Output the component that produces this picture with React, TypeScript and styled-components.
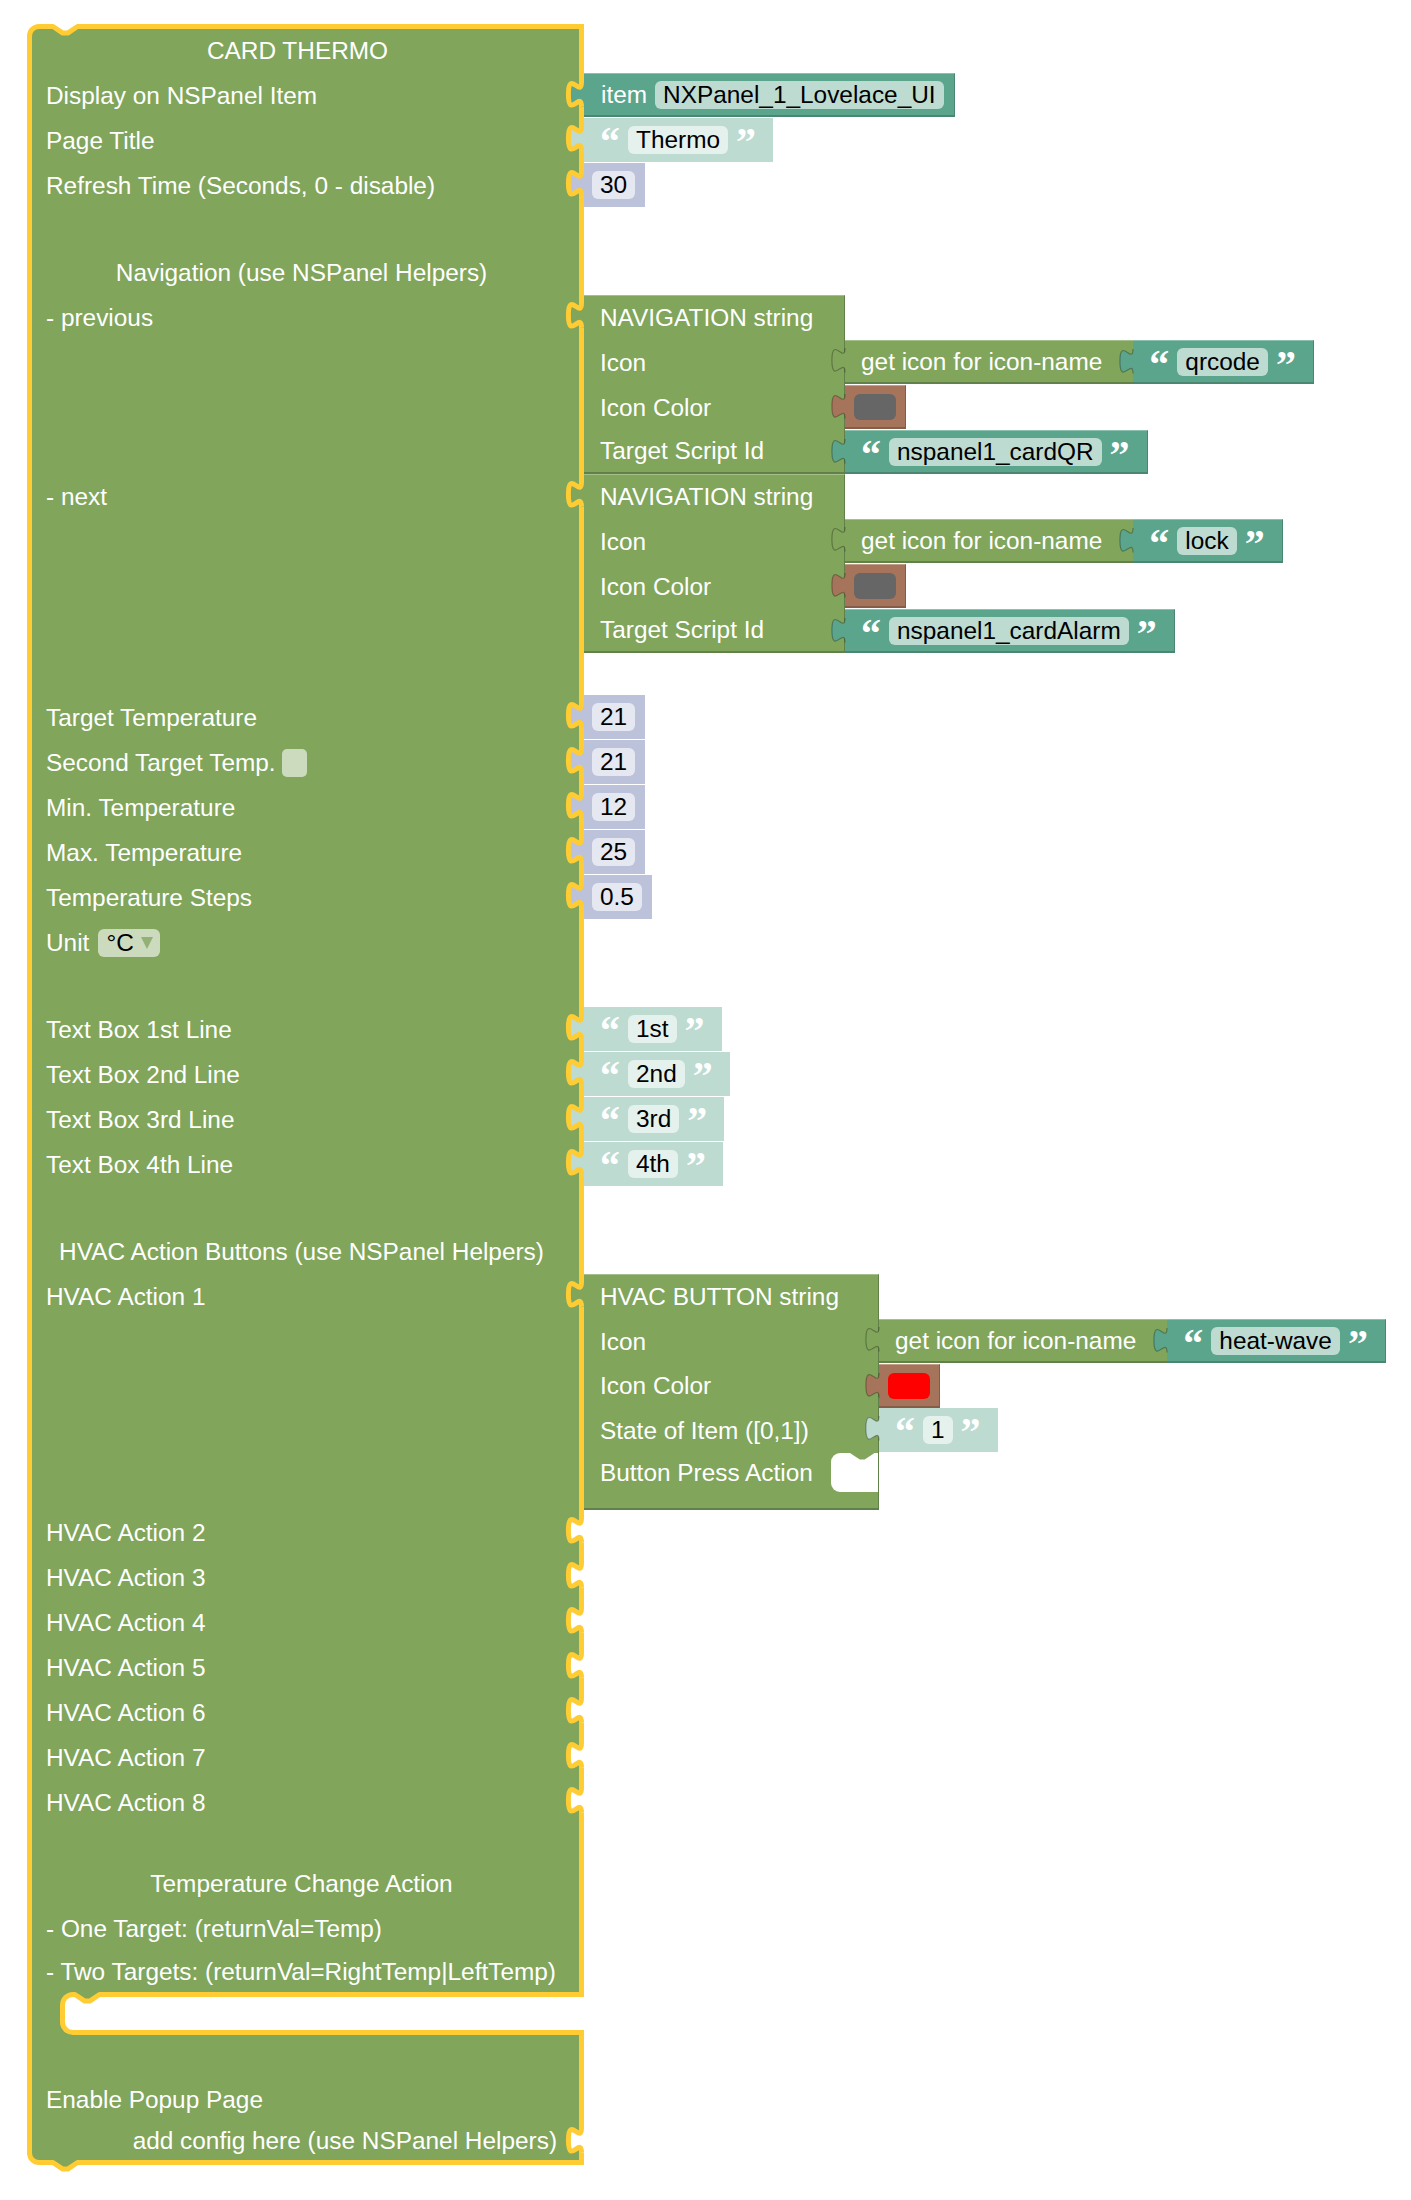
import React from "react";
import styled, { createGlobalStyle, css } from "styled-components";

// blockly-ish palette
const YELLOW = "#ffcc33";
const GREEN = "#80a55b";
const GREEN_LIGHT = "#a6c08c";
const GREEN_DARK = "#62804a";
const GREEN_FIELD = "#ccdbbd";
const TEAL = "#5ba58c";
const TEAL_LIGHT = "#8cc1af";
const TEAL_DARK = "#4a8672";
const TEAL_SHADOW = "#bddbd1";
const TEAL_FIELD = "#e5f1ed";
const NUM_SHADOW = "#bdc2db";
const NUM_FIELD = "#e5e7f1";
const BROWN = "#a5745b";
const BROWN_LIGHT = "#c29e8c";
const BROWN_DARK = "#855c48";

const FONT_SIZE = "24.4px";
const TAB_CURVE = "c0,16.4 -13.1,-13.1 -13.1,12.3 s13.1,-4.1 13.1,12.3";
const NOTCH = "l9.8,6.6 l4.9,0 l9.8,-6.6";

const GlobalStyle = createGlobalStyle`
  body {
    margin: 0;
    background: #fff;
    font-family: "Liberation Sans", Arial, sans-serif;
  }
`;

const Canvas = styled.div`
  padding: 24px 0 30px 27px;
`;

const Stack = styled.div`
  display: flex;
  flex-direction: column;
  align-items: flex-start;
`;

const Row = styled.div`
  display: flex;
  align-items: stretch;
`;

const Cell = styled.div<{ $h: number; $first?: boolean; $last?: boolean; $padR?: number }>`
  position: relative;
  box-sizing: border-box;
  flex: none;
  width: 557px;
  min-height: ${(p) => p.$h + (p.$first ? 5 : 0) + (p.$last ? 5 : 0)}px;
  background: ${GREEN};
  border-left: 5px solid ${YELLOW};
  border-right: 5px solid ${YELLOW};
  border-top: ${(p) => (p.$first ? `5px solid ${YELLOW}` : "0")};
  border-bottom: ${(p) => (p.$last ? `5px solid ${YELLOW}` : "0")};
  border-radius: ${(p) => (p.$first ? "12px 0 0 0" : p.$last ? "0 0 0 12px" : "0")};
  padding: 0 ${(p) => p.$padR ?? 22}px 0 14px;
  color: #fff;
  font-size: ${FONT_SIZE};
`;

const Label = styled.div<{ $h: number; $align: string }>`
  height: ${(p) => p.$h}px;
  display: flex;
  align-items: center;
  justify-content: ${(p) => (p.$align === "center" ? "center" : p.$align === "right" ? "flex-end" : "flex-start")};
  white-space: nowrap;
`;

const EdgeSvg = styled.svg`
  position: absolute;
  overflow: visible;
  z-index: 2;
`;

const TopNotchSvg = styled(EdgeSvg)`
  top: -5px;
  left: 21px;
`;

const BottomTabSvg = styled(EdgeSvg)`
  bottom: -12px;
  left: 21px;
`;

const EmptyNotchSvg = styled(EdgeSvg)<{ $top: number }>`
  right: -7px;
  top: ${(p) => p.$top}px;
`;

const StmtNotchSvg = styled(EdgeSvg)<{ $left: number; $top: number }>`
  left: ${(p) => p.$left}px;
  top: ${(p) => p.$top}px;
`;

const TabSvg = styled(EdgeSvg)`
  left: -16px;
  top: 8px;
`;

const Tab = ({ fill, main }: { fill: string; main?: boolean }) => {
  const x = main ? 13.5 : 16;
  return (
    <TabSvg width="18" height="26" viewBox="0 0 18 26">
      <path d={`M${x} 0 ${TAB_CURVE} L18 24.6 L18 0 Z`} fill={fill} />
      <path
        d={`M${x} 0 ${TAB_CURVE}`}
        fill="none"
        stroke={main ? YELLOW : "rgba(0,0,0,0.28)"}
        strokeWidth={main ? 5 : 1.2}
      />
    </TabSvg>
  );
};

const EmptyNotch = ({ top = 8 }: { top?: number }) => (
  <EmptyNotchSvg $top={top} width="18" height="26" viewBox="0 0 18 26">
    <path d={`M13.5 0 ${TAB_CURVE} L18 24.6 L18 0 Z`} fill="#fff" />
    <path d={`M13.5 0 ${TAB_CURVE}`} fill="none" stroke={YELLOW} strokeWidth={5} />
  </EmptyNotchSvg>
);

const TopNotch = () => (
  <TopNotchSvg width="25" height="12" viewBox="0 0 25 12">
    <path d={`M0 0 L0 2.5 ${NOTCH} L24.5 0 Z`} fill="#fff" />
    <path d={`M-2 2.5 L0 2.5 ${NOTCH} L26.5 2.5`} fill="none" stroke={YELLOW} strokeWidth={5} strokeLinejoin="round" />
  </TopNotchSvg>
);

const BottomTab = () => (
  <BottomTabSvg width="25" height="12" viewBox="0 0 25 12">
    <path d={`M0 0 L0 2.5 ${NOTCH} L24.5 0 Z`} fill={GREEN} />
    <path d={`M-2 2.5 L0 2.5 ${NOTCH} L26.5 2.5`} fill="none" stroke={YELLOW} strokeWidth={5} strokeLinejoin="round" />
  </BottomTabSvg>
);

type MainRowProps = {
  h?: number;
  label?: React.ReactNode;
  align?: "left" | "center" | "right";
  first?: boolean;
  last?: boolean;
  empty?: boolean;
  notchTop?: number;
  padR?: number;
  children?: React.ReactNode;
};

const MainRow = ({ h = 45, label, align = "left", first, last, empty, notchTop, padR, children }: MainRowProps) => (
  <Row>
    <Cell $h={h} $first={first} $last={last} $padR={padR}>
      {first && <TopNotch />}
      <Label $h={h} $align={align}>{label}</Label>
      {empty && <EmptyNotch top={notchTop} />}
      {last && <BottomTab />}
    </Cell>
    {children}
  </Row>
);

// statement input of the main block (C-shape)
const MainStmt = styled.div`
  display: flex;
  box-sizing: border-box;
  width: 557px;
  height: 43px;
  background: ${GREEN};
  border-left: 5px solid ${YELLOW};
  padding-left: 28px;
`;

const MainStmtGap = styled.div`
  position: relative;
  flex: 1;
  background: #fff;
  border: 5px solid ${YELLOW};
  border-right: 0;
  border-radius: 13px 0 0 13px;
`;

/* ---------- value blocks ---------- */

const Field = styled.span<{ $bg: string }>`
  display: inline-flex;
  align-items: center;
  height: 28px;
  padding: 0 8px;
  border-radius: 6px;
  background: ${(p) => p.$bg};
  color: #000;
  font-size: ${FONT_SIZE};
  white-space: nowrap;
`;

const Quote = styled.span<{ $open?: boolean }>`
  position: relative;
  top: 2px;
  align-self: flex-start;
  width: 20px;
  height: 44px;
  text-align: center;
  font: bold 40px "Liberation Serif", serif;
  line-height: 44px;
  color: #fff;
  margin: ${(p) => (p.$open ? "0 8px 0 0" : "0 0 0 8px")};
`;

const solidEdges = (light: string, dark: string) => css`
  border-top: 1px solid ${light};
  border-bottom: 2px solid ${dark};
  border-right: 1px solid ${dark};
`;

const StringBody = styled.div<{ $shadow?: boolean }>`
  position: relative;
  flex: none;
  align-self: flex-start;
  display: flex;
  align-items: center;
  box-sizing: border-box;
  height: 44px;
  padding: 0 17px 0 16px;
  background: ${(p) => (p.$shadow ? TEAL_SHADOW : TEAL)};
  ${(p) => !p.$shadow && solidEdges(TEAL_LIGHT, TEAL_DARK)}
`;

const TextBlock = ({ value, shadow, main }: { value: string; shadow?: boolean; main?: boolean }) => (
  <StringBody $shadow={shadow}>
    <Tab fill={shadow ? TEAL_SHADOW : TEAL} main={main} />
    <Quote $open>“</Quote>
    <Field $bg={shadow ? TEAL_FIELD : TEAL_SHADOW}>{value}</Field>
    <Quote>”</Quote>
  </StringBody>
);

const NumberBody = styled.div`
  position: relative;
  flex: none;
  align-self: flex-start;
  display: flex;
  align-items: center;
  box-sizing: border-box;
  height: 44px;
  padding: 0 10px 0 8px;
  background: ${NUM_SHADOW};
`;

const NumberBlock = ({ value }: { value: string }) => (
  <NumberBody>
    <Tab fill={NUM_SHADOW} main />
    <Field $bg={NUM_FIELD}>{value}</Field>
  </NumberBody>
);

const ItemBody = styled.div`
  position: relative;
  flex: none;
  align-self: flex-start;
  display: flex;
  align-items: center;
  box-sizing: border-box;
  height: 44px;
  padding: 0 10px 0 17px;
  background: ${TEAL};
  color: #fff;
  font-size: ${FONT_SIZE};
  ${solidEdges(TEAL_LIGHT, TEAL_DARK)}
`;

const ItemText = styled.span`
  margin-right: 8px;
`;

const ColorBody = styled.div`
  position: relative;
  flex: none;
  align-self: flex-start;
  display: flex;
  align-items: center;
  box-sizing: border-box;
  height: 44px;
  padding: 0 9px;
  background: ${BROWN};
  ${solidEdges(BROWN_LIGHT, BROWN_DARK)}
`;

const Swatch = styled.span<{ $color: string }>`
  width: 42px;
  height: 26px;
  border-radius: 6px;
  background: ${(p) => p.$color};
`;

const ColorBlock = ({ color }: { color: string }) => (
  <ColorBody>
    <Tab fill={BROWN} />
    <Swatch $color={color} />
  </ColorBody>
);

const ValueGroup = styled.div`
  position: relative;
  flex: none;
  align-self: flex-start;
  display: flex;
`;

const GetIconBody = styled.div`
  box-sizing: border-box;
  height: 44px;
  display: flex;
  align-items: center;
  padding: 0 31px 0 16px;
  background: ${GREEN};
  color: #fff;
  font-size: ${FONT_SIZE};
  white-space: nowrap;
  border-top: 1px solid ${GREEN_LIGHT};
  border-bottom: 2px solid ${GREEN_DARK};
`;

const GetIcon = ({ name }: { name: string }) => (
  <ValueGroup>
    <Tab fill={GREEN} />
    <GetIconBody>get icon for icon-name</GetIconBody>
    <TextBlock value={name} />
  </ValueGroup>
);

/* ---------- nested string-builder blocks ---------- */

const Block = styled.div`
  position: relative;
  flex: none;
  align-self: flex-start;
  display: flex;
  flex-direction: column;
`;

const BlockCell = styled.div<{ $w: number; $h?: number; $top?: boolean; $bottom?: boolean }>`
  box-sizing: border-box;
  flex: none;
  width: ${(p) => p.$w}px;
  height: ${(p) => p.$h ?? 45}px;
  display: flex;
  align-items: center;
  padding-left: 16px;
  background: ${GREEN};
  color: #fff;
  font-size: ${FONT_SIZE};
  white-space: nowrap;
  border-top: ${(p) => (p.$top ? `1px solid ${GREEN_LIGHT}` : "0")};
  border-bottom: ${(p) => (p.$bottom ? `2px solid ${GREEN_DARK}` : "0")};
  border-right: 1px solid ${GREEN_DARK};
`;

const NavBlock = ({ icon, target }: { icon: string; target: string }) => (
  <Block>
    <Tab fill={GREEN} main />
    <Row>
      <BlockCell $w={261} $top>NAVIGATION string</BlockCell>
    </Row>
    <Row>
      <BlockCell $w={261}>Icon</BlockCell>
      <GetIcon name={icon} />
    </Row>
    <Row>
      <BlockCell $w={261}>Icon Color</BlockCell>
      <ColorBlock color="#666666" />
    </Row>
    <Row>
      <BlockCell $w={261} $h={44} $bottom>Target Script Id</BlockCell>
      <TextBlock value={target} />
    </Row>
  </Block>
);

const StmtRow = styled.div`
  display: flex;
  width: 295px;
  height: 39px;
  background: ${GREEN};
  border-right: 1px solid ${GREEN_DARK};
  box-sizing: border-box;
`;

const StmtLabel = styled.div`
  box-sizing: border-box;
  width: 247px;
  padding-left: 16px;
  display: flex;
  align-items: center;
  color: #fff;
  font-size: ${FONT_SIZE};
  white-space: nowrap;
`;

const StmtGap = styled.div`
  position: relative;
  flex: 1;
  background: #fff;
  border-radius: 9px 0 0 9px;
`;

const BottomBar = styled.div`
  box-sizing: border-box;
  width: 295px;
  height: 18px;
  background: ${GREEN};
  border-bottom: 2px solid ${GREEN_DARK};
  border-right: 1px solid ${GREEN_DARK};
`;

const HvacBlock = () => (
  <Block>
    <Tab fill={GREEN} main />
    <Row>
      <BlockCell $w={295} $top>HVAC BUTTON string</BlockCell>
    </Row>
    <Row>
      <BlockCell $w={295}>Icon</BlockCell>
      <GetIcon name="heat-wave" />
    </Row>
    <Row>
      <BlockCell $w={295} $h={44}>Icon Color</BlockCell>
      <ColorBlock color="#ff0000" />
    </Row>
    <Row>
      <BlockCell $w={295}>State of Item ([0,1])</BlockCell>
      <TextBlock value="1" shadow />
    </Row>
    <StmtRow>
      <StmtLabel>Button Press Action</StmtLabel>
      <StmtGap>
        <StmtNotchSvg $left={19} $top={0} width="25" height="8" viewBox="0 0 25 8">
          <path d={`M0 0 ${NOTCH} Z`} fill={GREEN} />
        </StmtNotchSvg>
      </StmtGap>
    </StmtRow>
    <BottomBar />
  </Block>
);

/* ---------- inline fields inside labels ---------- */

const Check = styled.span`
  display: inline-block;
  width: 25px;
  height: 28px;
  margin-left: 6px;
  border-radius: 5px;
  background: ${GREEN_FIELD};
`;

const Dropdown = styled.span`
  display: inline-flex;
  align-items: center;
  height: 28px;
  margin-left: 9px;
  padding: 0 7px 0 8px;
  border-radius: 6px;
  background: ${GREEN_FIELD};
  color: #000;
`;

const Arrow = styled.span`
  width: 0;
  height: 0;
  margin-left: 7px;
  border-left: 6px solid transparent;
  border-right: 6px solid transparent;
  border-top: 12px solid #93b075;
`;

const temps = [
  ["Target Temperature", "21"],
  ["Second Target Temp.", "21"],
  ["Min. Temperature", "12"],
  ["Max. Temperature", "25"],
  ["Temperature Steps", "0.5"],
];

const textLines = ["1st", "2nd", "3rd", "4th"];

export default function App() {
  return (
    <>
      <GlobalStyle />
      <Canvas>
        <Stack>
          <MainRow first h={44} align="center" padR={30} label="CARD THERMO" />
          <MainRow label="Display on NSPanel Item">
            <ItemBody>
              <Tab fill={TEAL} main />
              <ItemText>item</ItemText>
              <Field $bg={TEAL_SHADOW}>NXPanel_1_Lovelace_UI</Field>
            </ItemBody>
          </MainRow>
          <MainRow label="Page Title">
            <TextBlock value="Thermo" shadow main />
          </MainRow>
          <MainRow label="Refresh Time (Seconds, 0 - disable)">
            <NumberBlock value="30" />
          </MainRow>
          <MainRow h={42} />
          <MainRow align="center" label="Navigation (use NSPanel Helpers)" />
          <MainRow label="- previous">
            <NavBlock icon="qrcode" target="nspanel1_cardQR" />
          </MainRow>
          <MainRow label="- next">
            <NavBlock icon="lock" target="nspanel1_cardAlarm" />
          </MainRow>
          <MainRow h={42} />
          {temps.map(([label, value], i) => (
            <MainRow
              key={label}
              label={
                i === 1 ? (
                  <>
                    {label}
                    <Check />
                  </>
                ) : (
                  label
                )
              }
            >
              <NumberBlock value={value} />
            </MainRow>
          ))}
          <MainRow
            label={
              <>
                Unit
                <Dropdown>
                  °C
                  <Arrow />
                </Dropdown>
              </>
            }
          />
          <MainRow h={42} />
          {textLines.map((t) => (
            <MainRow key={t} label={`Text Box ${t} Line`}>
              <TextBlock value={t} shadow main />
            </MainRow>
          ))}
          <MainRow h={42} />
          <MainRow align="center" label="HVAC Action Buttons (use NSPanel Helpers)" />
          <MainRow label="HVAC Action 1">
            <HvacBlock />
          </MainRow>
          {[2, 3, 4, 5, 6, 7, 8].map((n) => (
            <MainRow key={n} label={`HVAC Action ${n}`} empty />
          ))}
          <MainRow h={36} />
          <MainRow align="center" label="Temperature Change Action" />
          <MainRow label="- One Target: (returnVal=Temp)" />
          <MainRow h={41} label="- Two Targets: (returnVal=RightTemp|LeftTemp)" />
          <MainStmt>
            <MainStmtGap>
              <StmtNotchSvg $left={10} $top={-5} width="25" height="12" viewBox="0 0 25 12">
                <path d={`M0 0 L0 2.5 ${NOTCH} L24.5 0 Z`} fill={GREEN} />
                <path d={`M-2 2.5 L0 2.5 ${NOTCH} L26.5 2.5`} fill="none" stroke={YELLOW} strokeWidth={5} strokeLinejoin="round" />
              </StmtNotchSvg>
            </MainStmtGap>
          </MainStmt>
          <MainRow h={42} />
          <MainRow label="Enable Popup Page" />
          <MainRow last h={38} align="right" empty notchTop={6} label="add config here (use NSPanel Helpers)" />
        </Stack>
      </Canvas>
    </>
  );
}
